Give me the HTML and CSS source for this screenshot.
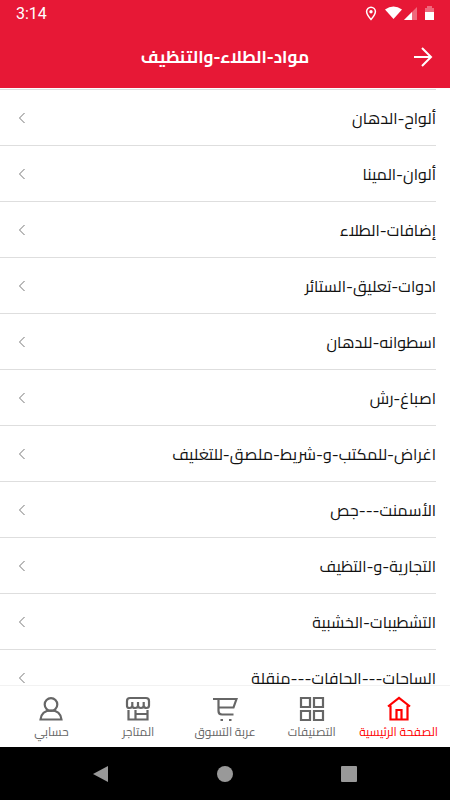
FILE: index.html
```html
<!DOCTYPE html>
<html lang="ar" dir="rtl">
<head>
    <meta charset="UTF-8">
    <meta name="viewport" content="width=device-width, initial-scale=1.0">
    <title>مواد-الطلاء-والتنظيف</title>
    <link rel="stylesheet" href="styles.css">
</head>
<body>
    <header class="header">
        <div class="status-bar" dir="ltr">
            <span class="clock">3:14</span>
            <svg class="status-icons" width="72" height="16" viewBox="0 0 72 16">
                <path d="M8 1.200a4.400 4.400 0 0 0-4.400 4.400C3.600 8.800 8 13.400 8 13.400s4.400-4.600 4.400-7.800A4.400 4.400 0 0 0 8 1.200z" fill="none" stroke="#fff" stroke-width="1.5"/>
                <circle cx="8" cy="5.700" r="1.700" fill="#fff"/>
                <path d="M22 3.500Q30.500-2.500 39 3.500L30.500 13z" fill="#fff"/>
                <path d="M54 1v13H41z" fill="#fff" opacity=".35"/>
                <path d="M49 6v8h-8z" fill="#fff"/>
                <path d="M62 2h2V0h5v2h2v4h-9z" fill="#fff" opacity=".35"/>
                <path d="M62 6h9v8h-9z" fill="#fff"/>
            </svg>
        </div>
        <div class="title-bar">
            <button class="back" aria-label="رجوع">
                <svg width="20" height="22" viewBox="0 0 20 22" fill="none" stroke="#fff" stroke-width="2">
                    <path d="M1 11h17M9 2l9 9-9 9"/>
                </svg>
            </button>
            <h1>مواد-الطلاء-والتنظيف</h1>
        </div>
    </header>

    <main class="list">
        <a href="#" class="row"><span>ألواح-الدهان</span><svg class="chevron" viewBox="0 0 8 12"><path d="M6.500 1L1.500 6l5 5"/></svg></a>
        <a href="#" class="row"><span>ألوان-المينا</span><svg class="chevron" viewBox="0 0 8 12"><path d="M6.500 1L1.500 6l5 5"/></svg></a>
        <a href="#" class="row"><span>إضافات-الطلاء</span><svg class="chevron" viewBox="0 0 8 12"><path d="M6.500 1L1.500 6l5 5"/></svg></a>
        <a href="#" class="row"><span>ادوات-تعليق-الستائر</span><svg class="chevron" viewBox="0 0 8 12"><path d="M6.500 1L1.500 6l5 5"/></svg></a>
        <a href="#" class="row"><span>اسطوانه-للدهان</span><svg class="chevron" viewBox="0 0 8 12"><path d="M6.500 1L1.500 6l5 5"/></svg></a>
        <a href="#" class="row"><span>اصباغ-رش</span><svg class="chevron" viewBox="0 0 8 12"><path d="M6.500 1L1.500 6l5 5"/></svg></a>
        <a href="#" class="row"><span>اغراض-للمكتب-و-شريط-ملصق-للتغليف</span><svg class="chevron" viewBox="0 0 8 12"><path d="M6.500 1L1.500 6l5 5"/></svg></a>
        <a href="#" class="row"><span>الأسمنت---جص</span><svg class="chevron" viewBox="0 0 8 12"><path d="M6.500 1L1.500 6l5 5"/></svg></a>
        <a href="#" class="row"><span>التجارية-و-التظيف</span><svg class="chevron" viewBox="0 0 8 12"><path d="M6.500 1L1.500 6l5 5"/></svg></a>
        <a href="#" class="row"><span>التشطيبات-الخشبية</span><svg class="chevron" viewBox="0 0 8 12"><path d="M6.500 1L1.500 6l5 5"/></svg></a>
        <a href="#" class="row"><span>الساحات---الحافات---منقلة</span><svg class="chevron" viewBox="0 0 8 12"><path d="M6.500 1L1.500 6l5 5"/></svg></a>
    </main>

    <nav class="tabs">
        <a href="#" class="tab active">
            <svg viewBox="0 0 26 26"><path d="M2 10.500L13 2l11 8.500M4.500 9.500V23.500h17V9.500M10.500 23V14h5v9"/></svg>
            <span>الصفحة الرئيسية</span>
        </a>
        <a href="#" class="tab">
            <svg viewBox="0 0 26 26"><path d="M2 2h9v9H2zM15 2h9v9h-9zM2 15h9v9H2zM15 15h9v9h-9z"/></svg>
            <span>التصنيفات</span>
        </a>
        <a href="#" class="tab">
            <svg viewBox="0 0 26 26"><path d="M1 3h23.500l-3 8.500H6.500M6.500 3v12q0 3.500 3.500 3.500h11.500"/><path d="M8.500 24h2.500M17 24h2.500"/></svg>
            <span>عربة التسوق</span>
        </a>
        <a href="#" class="tab">
            <svg viewBox="0 0 26 26"><path d="M5 2h16q3 0 3 3v4.500q0 2.500-2.500 2.500T18.700 9.500V6v3.500q0 2.500-2.800 2.500T13 9.500V6v3.500q0 2.500-2.900 2.500T7.300 9.500V6v3.500Q7.300 12 4.500 12T2 9.500V5q0-3 3-3zM3.500 14v9.500h19V14M10.500 23V14M10.500 18h12"/></svg>
            <span>المتاجر</span>
        </a>
        <a href="#" class="tab">
            <svg viewBox="0 0 26 26"><circle cx="13" cy="8.500" r="6.300"/><path d="M2.500 23.500q1-9 10.500-9t10.500 9z"/></svg>
            <span>حسابي</span>
        </a>
    </nav>

    <footer class="system-bar" dir="ltr">
        <button aria-label="Back"><svg viewBox="0 0 18 18"><path d="M16 1v16L1 9z"/></svg></button>
        <button aria-label="Home"><svg viewBox="0 0 18 18"><circle cx="9" cy="9" r="8"/></svg></button>
        <button aria-label="Recent"><svg viewBox="0 0 18 18"><rect x="1" y="1" width="16" height="16" rx="1"/></svg></button>
    </footer>
</body>
</html>
```

FILE: styles.css
```css
* {
    box-sizing: border-box;
}
body {
    font-family: Cairo, "Noto Sans Arabic", "DejaVu Sans", sans-serif;
    background: #fff;
    color: #111;
    margin: 0;
    height: 100vh;
    display: flex;
    flex-direction: column;
}
a {
    color: inherit;
    text-decoration: none;
}
button {
    background: none;
    border: none;
    padding: 0;
    cursor: pointer;
}
svg {
    display: block;
}
.header {
    background: #e71836;
    color: #fff;
    height: 88px;
    flex: none;
}
.status-bar {
    display: flex;
    justify-content: space-between;
    align-items: center;
    height: 28px;
    padding: 0 15px 0 16px;
}
.clock {
    font: 400 16px/28px Roboto, sans-serif;
}
.title-bar {
    display: grid;
    grid-template-columns: 20px 1fr 20px;
    align-items: center;
    height: 58px;
    padding: 0 17px;
}
.title-bar h1 {
    margin: 0;
    font-size: 17px;
    line-height: 28px;
    text-align: center;
}
.list {
    flex: 1;
    min-height: 0;
    overflow-y: auto;
    scrollbar-width: none;
    padding-top: 1px;
}
.row {
    display: flex;
    justify-content: space-between;
    align-items: center;
    height: 56px;
    margin-right: 14px;
    padding-left: 18px;
    border-top: 1px solid #dedede;
    font-size: 16px;
    line-height: 24px;
}
.chevron {
    width: 8px;
    height: 12px;
    fill: none;
    stroke: #777;
    stroke-width: 1;
}
.tabs {
    display: flex;
    flex: none;
    height: 62px;
    padding: 0 8px;
    border-top: 1px solid #f2f2f2;
}
.tab {
    flex: 1 1 0;
    min-width: 0;
    display: flex;
    flex-direction: column;
    align-items: center;
    padding-top: 10px;
    color: #666;
    font-size: 12px;
    line-height: 20px;
    white-space: nowrap;
}
.tab svg {
    width: 26px;
    height: 26px;
    fill: none;
    stroke: currentColor;
    stroke-width: 2.2;
}
.tab.active {
    color: #f00;
}
.system-bar {
    display: flex;
    justify-content: center;
    align-items: center;
    gap: 106px;
    flex: none;
    height: 53px;
    background: #000;
}
.system-bar svg {
    width: 18px;
    height: 18px;
    fill: #999;
}
```
